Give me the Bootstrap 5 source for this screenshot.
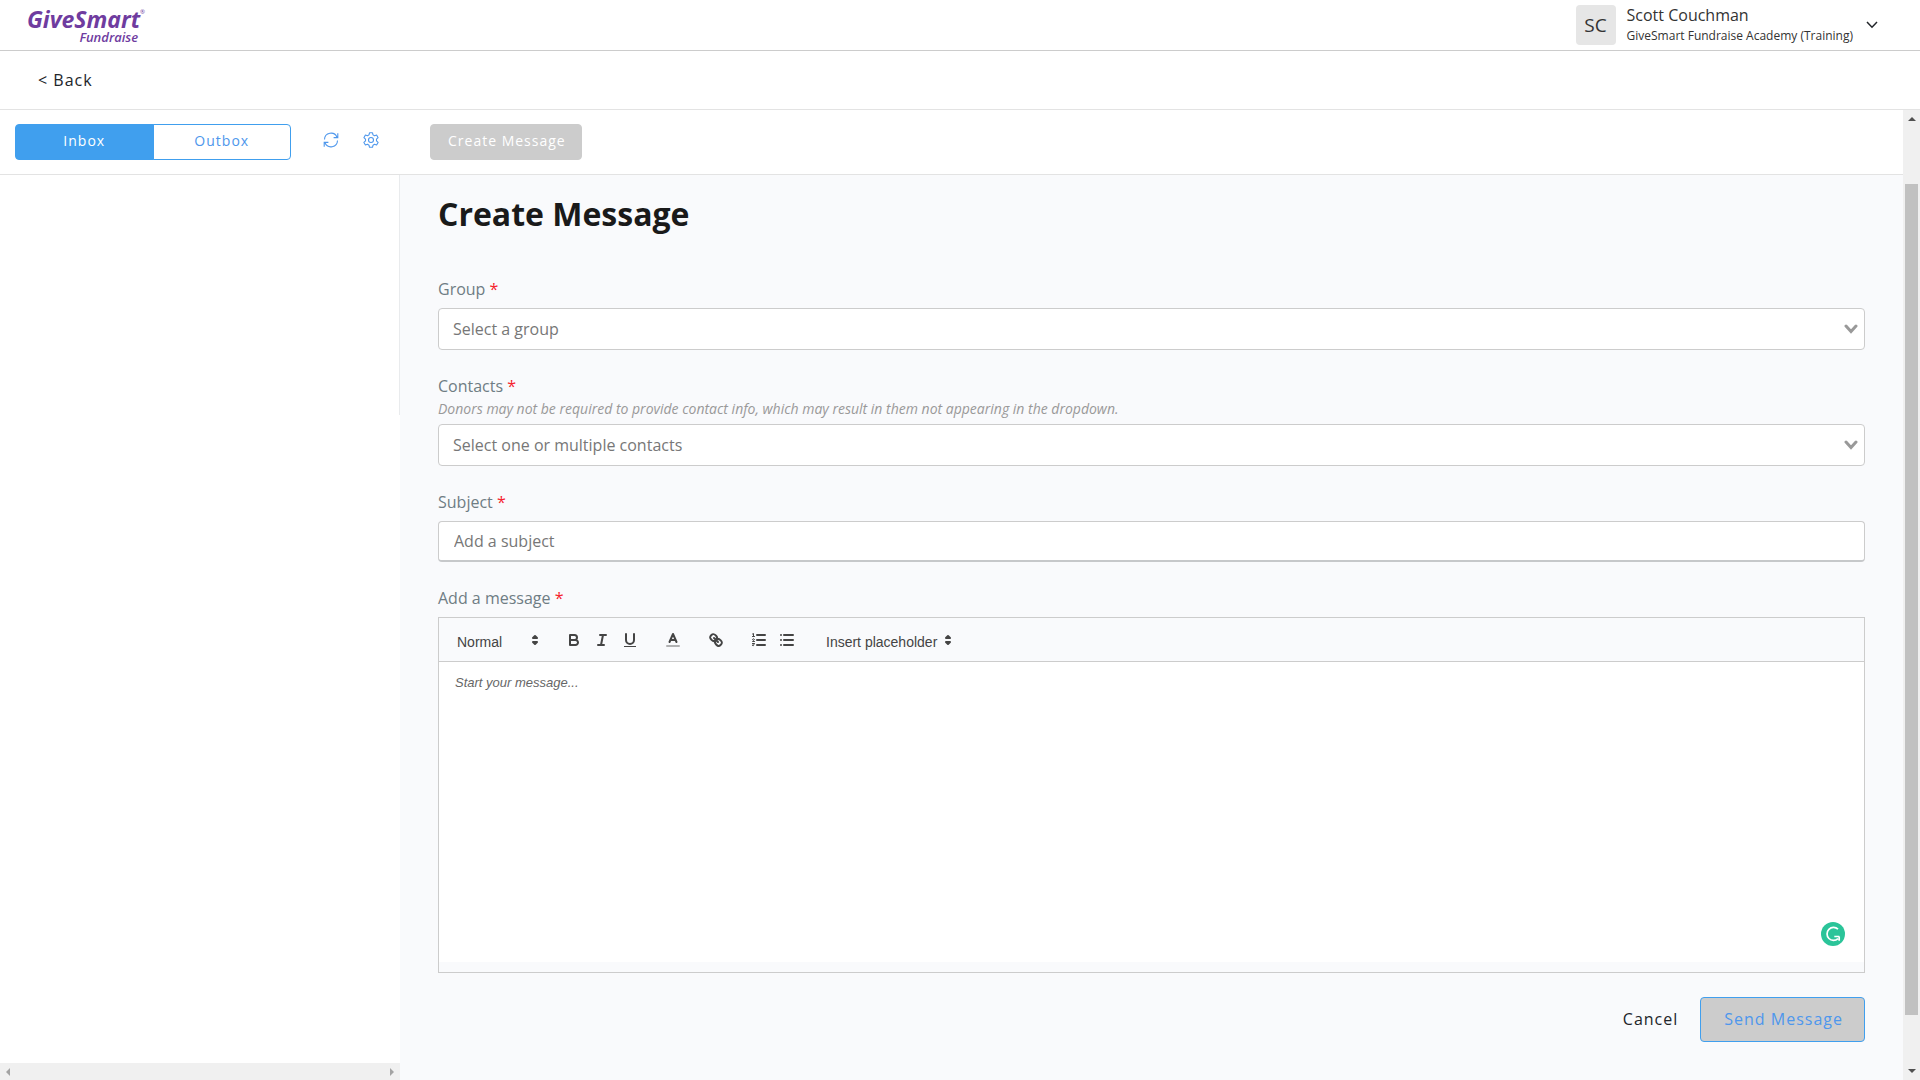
<!DOCTYPE html>
<html lang="en">
<head>
<meta charset="utf-8">
<meta name="viewport" content="width=device-width, initial-scale=1">
<title>GiveSmart Fundraise - Create Message</title>
<link href="https://cdn.jsdelivr.net/npm/bootstrap@5.3.0/dist/css/bootstrap.min.css" rel="stylesheet">
<style>
  body { font-family: "Open Sans", "Noto Sans", sans-serif; font-size: 16px; line-height: 24px; color: #212529; background: #fff; }
  .topbar { height: 51px; border-bottom: 1px solid #ccc; padding: 0 42px 0 27px; }
  .brand { color: #6f3c9f; font-style: italic; font-weight: 700; text-decoration: none; line-height: 1; }
  .brand-main { font-size: 23px; line-height: 23px; }
  .brand-main sup { font-size: 6px; font-weight: 400; top: -14px; }
  .brand-sub { font-size: 13px; line-height: 12px; font-weight: 600; padding-right: 7px; }
  .avatar { width: 40px; height: 40px; border-radius: 4px; background: #e6e6e6; font-size: 19px; color: #333; }
  .user-text { margin-left: 11px; }
  .user-name { line-height: 22px; color: #333; }
  .user-org { font-size: 12px; line-height: 20px; color: #333; padding-bottom: 1px; }
  .account-btn { margin-left: 13px; }
  .backbar { height: 59px; border-bottom: 1px solid #e3e3e3; padding: 0 38px; }
  .spaced { letter-spacing: 1px; }
  .backbar a { color: #212529; }
  .toolbar-row { height: 65px; border-bottom: 1px solid #e3e3e3; padding: 13px 15px 14px; }
  .side-tools { width: 415px; }
  .tabs-box { width: 276px; height: 36px; }
  .tabs-box .btn { --bs-btn-font-size: 14px; --bs-btn-line-height: 20px; --bs-btn-border-color: #409fee; --bs-btn-color: #4e97ec; --bs-btn-active-bg: #409fee; --bs-btn-active-border-color: #409fee; --bs-btn-active-color: #fff; --bs-btn-border-radius: 4px; flex: 1 1 0; padding-top: 0; padding-bottom: 2px; }
  .btn-grey { --bs-btn-font-size: 14px; --bs-btn-line-height: 20px; --bs-btn-disabled-bg: #ccc; --bs-btn-disabled-border-color: #ccc; --bs-btn-disabled-color: #fff; --bs-btn-disabled-opacity: 1; --bs-btn-border-radius: 4px; height: 36px; padding: 0 15px 2px 17px; }
  .icon-btn { background: none; border: 0; padding: 0; line-height: 0; color: #4e97ec; }
  .mail-icons { gap: 24px; padding: 0 0 3px 32px; }
  .side-pane { width: 400px; }
  .side-list { height: 240px; border-right: 1px solid #e9ebed; }
  .hscroll { height: 17px; background: #f0f0f0; padding: 0 6px; }
  .vscroll { width: 17px; background: #f0f0f0; padding: 5px 2px; line-height: 0; }
  .vthumb { background: #c1c1c1; margin-top: 61px; margin-bottom: 52px; }
  .content-pane { background: #f9fafc; padding: 19px 38px 30px; }
  h1 { font-size: 32px; line-height: 40px; font-weight: 700; color: #1a1a1a; margin-bottom: 43px; }
  .field-label { color: #6f7d84; line-height: 24px; margin-bottom: 7px; }
  .req { color: #f5222d; }
  .field-note { font-size: 14px; line-height: 22px; font-style: italic; color: #999; margin-bottom: 4px; }
  .field-select { height: 42px; border: 1px solid #ccc; border-radius: 4px; color: #777; padding: 0 14px; background-color: #fff; background-size: 14px 10px; background-position: right 6px center;
    background-image: url("data:image/svg+xml,%3csvg xmlns='http://www.w3.org/2000/svg' viewBox='0 0 14 10'%3e%3cpath d='M2 2l5 5.5L12 2' fill='none' stroke='%23999' stroke-width='3' stroke-linecap='round'/%3e%3c/svg%3e"); }
  .field-input { height: 41px; border: 1px solid #ccc; border-bottom: 2px solid #c6c8ca; border-radius: 4px; padding: 0 15px; }
  .field-input::placeholder { color: #777; }
  .editor { border: 1px solid #ccc; height: 356px; }
  .editor-tools { height: 44px; border-bottom: 1px solid #ccc; padding: 8px; gap: 15px; }
  .tool-select { appearance: none; border: 0; background: transparent no-repeat right 1px top 5px / 18px 18px; height: 28px; font: 500 14px/24px "Liberation Sans", Arial, sans-serif; color: #444; padding: 4px 0 0 10px;
    background-image: url("data:image/svg+xml,%3csvg xmlns='http://www.w3.org/2000/svg' viewBox='0 0 18 18'%3e%3cg fill='%23444' stroke='%23444' stroke-width='2' stroke-linejoin='round'%3e%3cpath d='M7 11l2 2 2-2z M7 7l2-2 2 2z'/%3e%3c/g%3e%3c/svg%3e"); }
  .size-select { width: 98px; }
  .insert-select { width: 142px; }
  .tool { width: 28px; height: 24px; padding: 3px 5px; border: 0; background: none; line-height: 0; }
  .tool svg { width: 18px; height: 18px; fill: none; stroke: #444; stroke-width: 2; stroke-linecap: round; stroke-linejoin: round; }
  .editor-text { border: 0; outline: 0; resize: none; background: #fff; padding: 12px 16px; font: 13px/18px "Liberation Sans", Arial, sans-serif; margin-bottom: 10px; }
  .editor-text::placeholder { font-style: italic; color: #666; }
  .assist { right: 19px; bottom: 26px; }
  .actions { margin-top: 24px; gap: 22px; }
  .btn-cancel { padding-bottom: 2px; }
  .btn-send { --bs-btn-line-height: 24px; --bs-btn-disabled-bg: #ccc; --bs-btn-disabled-border-color: #409fee; --bs-btn-disabled-color: #4e97ec; --bs-btn-disabled-opacity: 1; --bs-btn-border-radius: 4px; height: 45px; padding: 0 21px 2px 23px; }
</style>
<script src="https://cdn.jsdelivr.net/npm/bootstrap@5.3.0/dist/js/bootstrap.bundle.min.js"></script>
</head>
<body class="d-flex flex-column min-vh-100">
<header class="topbar d-flex align-items-center justify-content-between">
  <a class="brand d-flex flex-column align-items-end" href="#">
    <span class="brand-main">GiveSmart<sup>®</sup></span>
    <span class="brand-sub">Fundraise</span>
  </a>
  <div class="d-flex align-items-center">
    <div class="avatar d-flex align-items-center justify-content-center">SC</div>
    <div class="user-text">
      <div class="user-name">Scott Couchman</div>
      <div class="user-org">GiveSmart Fundraise Academy (Training)</div>
    </div>
    <button class="icon-btn account-btn text-dark" type="button" aria-label="Account menu">
      <svg width="12" height="8" viewBox="0 0 12 8" fill="none" stroke="currentColor" stroke-width="1.5"><path d="M1 1l5 5.2L11 1"/></svg>
    </button>
  </div>
</header>
<nav class="backbar d-flex align-items-center"><a class="text-decoration-none spaced" href="#">&lt; Back</a></nav>

<div class="d-flex flex-grow-1">
  <main class="d-flex flex-column flex-grow-1">
    <div class="toolbar-row d-flex align-items-center">
      <div class="side-tools d-flex align-items-center">
        <div class="btn-group tabs-box" role="group" aria-label="Mailbox">
          <button type="button" class="btn active spaced">Inbox</button>
          <button type="button" class="btn spaced">Outbox</button>
        </div>
        <div class="mail-icons d-flex">
          <button class="icon-btn" type="button" aria-label="Refresh">
            <svg width="16" height="16" viewBox="0 0 16 16" fill="none" stroke="currentColor" stroke-width="1.1"><path d="M1.500 7.500A6.500 6.500 0 0 1 14 5.200M14.800 1.200v4.400h-4.200M14.500 8.500A6.500 6.500 0 0 1 2 10.800M1.200 14.800v-4.400h4.200"/></svg>
          </button>
          <button class="icon-btn" type="button" aria-label="Settings">
            <svg width="16" height="16" viewBox="0 0 16 16" fill="none" stroke="currentColor" stroke-width="1.1" stroke-linejoin="round"><path d="M6.500 .8h3l.5 2.100 1.500.9 2.100-.7 1.500 2.600-1.600 1.500v1.700l1.600 1.500-1.500 2.600-2.100-.7-1.500.9-.5 2.100h-3L6 13.200l-1.500-.9-2.100.7L.9 10.400l1.600-1.500V7.200L.9 5.700l1.500-2.600 2.100.7L6 2.900z"/><circle cx="8" cy="8" r="2.500"/></svg>
          </button>
        </div>
      </div>
      <button type="button" class="btn btn-grey spaced" disabled>Create Message</button>
    </div>
    <div class="d-flex flex-grow-1">
      <aside class="side-pane d-flex flex-column justify-content-between flex-shrink-0">
        <div class="side-list"></div>
        <div class="hscroll d-flex align-items-center justify-content-between">
          <svg width="4" height="8" viewBox="0 0 4 8" fill="#a3a3a3"><path d="M4 0v8L0 4z"/></svg>
          <svg width="4" height="8" viewBox="0 0 4 8" fill="#a3a3a3"><path d="M0 0v8l4-4z"/></svg>
        </div>
      </aside>
      <section class="content-pane flex-grow-1">
        <h1>Create Message</h1>
        <form>
          <label class="field-label d-block" for="group">Group <span class="req">*</span></label>
          <select class="form-select field-select" id="group"><option>Select a group</option></select>

          <label class="field-label d-block mt-4 mb-0" for="contacts">Contacts <span class="req">*</span></label>
          <div class="field-note">Donors may not be required to provide contact info, which may result in them not appearing in the dropdown.</div>
          <select class="form-select field-select" id="contacts"><option>Select one or multiple contacts</option></select>

          <label class="field-label d-block mt-4" for="subject">Subject <span class="req">*</span></label>
          <input class="form-control field-input" id="subject" type="text" placeholder="Add a subject">

          <label class="field-label d-block mt-4" for="message">Add a message <span class="req">*</span></label>
          <div class="editor d-flex flex-column position-relative">
            <div class="editor-tools d-flex align-items-center flex-shrink-0">
              <select class="tool-select size-select" aria-label="Text style"><option>Normal</option></select>
              <div class="d-flex">
                <button class="tool" type="button" aria-label="Bold"><svg viewBox="0 0 18 18"><path d="M5 4h4.500A2.500 2.500 0 0 1 12 6.500 2.500 2.500 0 0 1 9.500 9H5zM5 9h5.500A2.500 2.500 0 0 1 13 11.500 2.500 2.500 0 0 1 10.500 14H5z"/></svg></button>
                <button class="tool" type="button" aria-label="Italic"><svg viewBox="0 0 18 18"><path d="M7 4h6M5 14h6M8 14l2-10"/></svg></button>
                <button class="tool" type="button" aria-label="Underline"><svg viewBox="0 0 18 18"><path d="M5 3v6a4 4 0 0 0 8 0V3"/><path d="M3 15.500h12" stroke-width="1" stroke-linecap="butt"/></svg></button>
              </div>
              <button class="tool" type="button" aria-label="Text colour"><svg viewBox="0 0 18 18"><path d="M3 15h12" opacity=".4"/><path d="M5.500 11L9 3l3.500 8M11.600 9H6.400"/></svg></button>
              <button class="tool" type="button" aria-label="Link"><svg viewBox="0 0 18 18"><path d="M7 7l4 4M8.900 4.577a3.476 3.476 0 0 1 .36 4.679A3.476 3.476 0 0 1 4.577 8.900C3.185 7.500 2.035 6.400 4.217 4.217S7.500 3.185 8.900 4.577zM13.423 9.100a3.476 3.476 0 0 0-4.679-.36 3.476 3.476 0 0 0 .36 4.679c1.392 1.392 2.500 2.542 4.679.36S14.815 10.500 13.423 9.100z"/></svg></button>
              <div class="d-flex">
                <button class="tool" type="button" aria-label="Numbered list"><svg viewBox="0 0 18 18"><path d="M7 4h8M7 9h8M7 14h8"/><path d="M2.500 5.500h2M3.500 5.500v-3l-1 .5M4.500 10.500h-2c0-.8 1.900-1.200 1.900-2a1 1 0 0 0-1.900 0M2.500 14.600a1 1 0 1 0 0-1.800M2.500 12.500h2" stroke-width="1"/></svg></button>
                <button class="tool" type="button" aria-label="Bulleted list"><svg viewBox="0 0 18 18"><path d="M6 4h9M6 9h9M6 14h9M3 4h0M3 9h0M3 14h0"/></svg></button>
              </div>
              <select class="tool-select insert-select" aria-label="Insert placeholder"><option>Insert placeholder</option></select>
            </div>
            <textarea class="editor-text flex-grow-1" id="message" placeholder="Start your message..."></textarea>
            <button class="icon-btn assist position-absolute" type="button" aria-label="Writing assistant">
              <svg width="24" height="24" viewBox="0 0 24 24" fill="none"><circle cx="12" cy="12" r="12" fill="#2bc499"/><path d="M17 7.200A6.500 6.500 0 1 0 17 16.700M13.300 14.500h5M18.200 14.500v4.300" stroke="#fff" stroke-width="1.700"/></svg>
            </button>
          </div>
          <div class="actions d-flex justify-content-end align-items-center">
            <button type="button" class="icon-btn btn-cancel spaced text-dark lh-base">Cancel</button>
            <button type="submit" class="btn btn-send spaced" disabled>Send Message</button>
          </div>
        </form>
      </section>
    </div>
  </main>
  <div class="vscroll d-flex flex-column align-items-center flex-shrink-0" aria-hidden="true">
    <svg width="8" height="8" viewBox="0 0 8 8" fill="#505050"><path d="M0 6h8L4 2z"/></svg>
    <div class="vthumb flex-grow-1 w-100"></div>
    <svg width="8" height="8" viewBox="0 0 8 8" fill="#505050"><path d="M0 2h8L4 6z"/></svg>
  </div>
</div>
</body>
</html>
